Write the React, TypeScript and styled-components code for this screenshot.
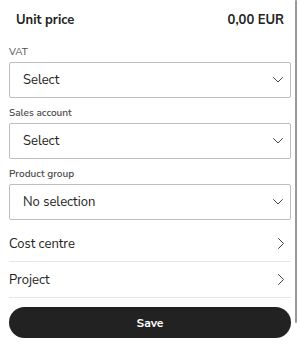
import React from 'react';
import styled, { createGlobalStyle } from 'styled-components';

const GlobalStyle = createGlobalStyle`
  html, body {
    margin: 0;
    padding: 0;
    background: #ffffff;
  }
  body {
    font-family: 'Nunito Sans', Lato, 'Open Sans', sans-serif;
    color: #222222;
    -webkit-font-smoothing: antialiased;
  }
`;

const Page = styled.div`
  position: relative;
  width: 300px;
  height: 353px;
  overflow: hidden;
`;

const Content = styled.div`
  display: flex;
  flex-direction: column;
  width: 282px;
  padding: 0 9px;
`;

const Header = styled.div`
  display: flex;
  align-items: center;
  justify-content: space-between;
  height: 40px;
  padding: 0 7px;
  font-size: 13px;
  font-weight: 700;
`;

const Field = styled.div<{ $first?: boolean }>`
  display: flex;
  flex-direction: column;
  gap: 4px;
  margin-top: ${({ $first }) => ($first ? '6px' : '9px')};
`;

const Label = styled.div<{ $medium?: boolean }>`
  font-size: 10px;
  line-height: 12px;
  color: #4d4d4d;
  font-weight: ${({ $medium }) => ($medium ? 600 : 400)};
`;

const SelectBox = styled.div`
  display: flex;
  align-items: center;
  justify-content: space-between;
  height: 34px;
  padding: 0 7px 0 13px;
  border: 1px solid #bdbdbd;
  border-radius: 2px;
  font-size: 13px;
`;

const Rows = styled.div`
  display: flex;
  flex-direction: column;
  margin-top: 6px;
`;

const Row = styled.div`
  display: flex;
  align-items: center;
  justify-content: space-between;
  height: 35px;
  padding-right: 7px;
  border-bottom: 1px solid #e6e6e6;
  font-size: 13px;
`;

const SaveButton = styled.button`
  margin-top: 9px;
  height: 31px;
  border: none;
  border-radius: 16px;
  background: #222222;
  color: #ffffff;
  font-family: inherit;
  font-size: 12px;
  font-weight: 700;
`;

const Scrollbar = styled.div`
  position: absolute;
  top: 0;
  right: 3px;
  width: 2px;
  height: 323px;
  background: #9a9a9a;
  border-radius: 1px;
`;

const ChevronDown = () => (
  <svg width="10" height="6" viewBox="0 0 10 6" fill="none">
    <path d="M0.5 0.5 L5 5 L9.5 0.5" stroke="#444" strokeWidth="1" strokeLinecap="round" strokeLinejoin="round" />
  </svg>
);

const ChevronRight = () => (
  <svg width="6" height="11" viewBox="0 0 6 11" fill="none">
    <path d="M0.5 0.5 L5.5 5.5 L0.5 10.5" stroke="#444" strokeWidth="1" strokeLinecap="round" strokeLinejoin="round" />
  </svg>
);

const fields = [
  { label: 'VAT', value: 'Select', medium: false },
  { label: 'Sales account', value: 'Select', medium: true },
  { label: 'Product group', value: 'No selection', medium: true },
];

const App = () => (
  <>
    <GlobalStyle />
    <Page>
      <Content>
        <Header>
          <span>Unit price</span>
          <span>0,00 EUR</span>
        </Header>
        {fields.map((f, i) => (
          <Field key={f.label} $first={i === 0}>
            <Label $medium={f.medium}>{f.label}</Label>
            <SelectBox>
              <span>{f.value}</span>
              <ChevronDown />
            </SelectBox>
          </Field>
        ))}
        <Rows>
          <Row>
            <span>Cost centre</span>
            <ChevronRight />
          </Row>
          <Row>
            <span>Project</span>
            <ChevronRight />
          </Row>
        </Rows>
        <SaveButton>Save</SaveButton>
      </Content>
      <Scrollbar />
    </Page>
  </>
);

export default App;
